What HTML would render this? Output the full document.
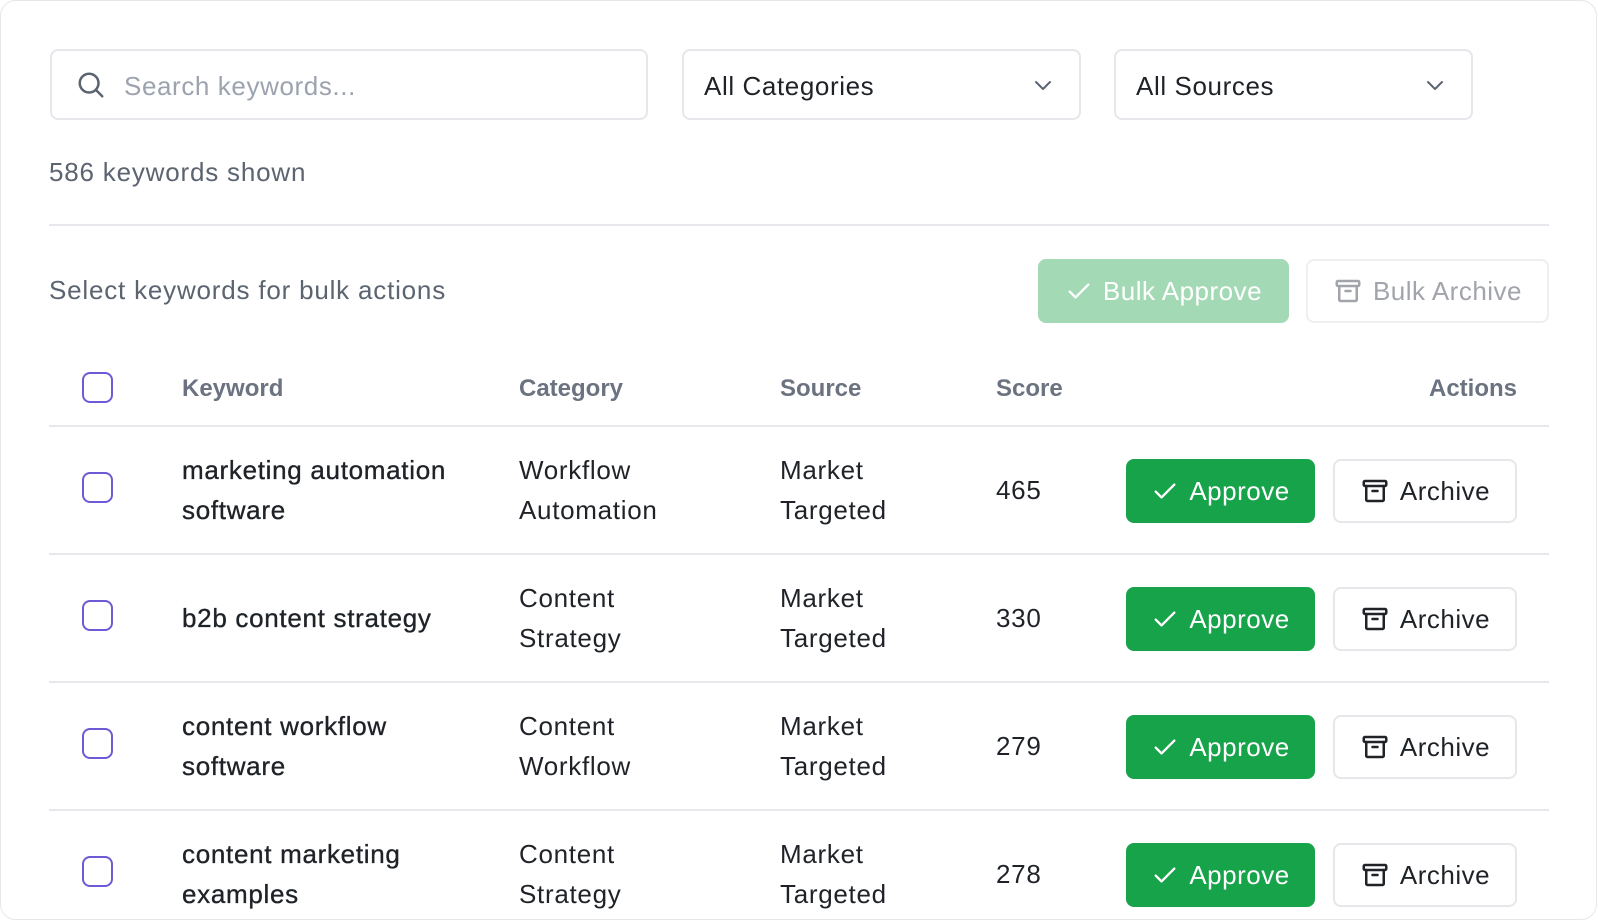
<!DOCTYPE html>
<html><head><meta charset="utf-8"><style>
*{box-sizing:border-box;margin:0;padding:0}
body{width:1598px;height:900px;background:#fff;font-family:"Liberation Sans",Arial,sans-serif;position:relative;overflow:hidden;color:#1f2328}
.card{position:absolute;left:0;top:0;width:1597px;height:920px;border:1px solid #e5e7eb;border-radius:16px}
.a{position:absolute}
.box{border:2px solid #e5e7eb;border-radius:8px;background:#fff}
.inp{font-size:26px;letter-spacing:0.6px;display:flex;align-items:center}
.cb{position:absolute;left:82px;width:31px;height:31px;border:2px solid #6d5ad6;border-radius:8px}
.hdr{position:absolute;top:375px;font-size:24px;font-weight:bold;color:#6b7280}
.line{position:absolute;left:49px;width:1500px;height:2px;background:#e8e8ec}
.cell{position:absolute;font-size:26px;letter-spacing:0.7px;line-height:40px;color:#1f2328}
.kw{-webkit-text-stroke:0.35px #1f2328}
.btn{position:absolute;height:64px;border-radius:8px;display:flex;align-items:center;justify-content:center;font-size:26px;letter-spacing:0.5px;gap:10px}
.ap{background:#17a34a;color:#fff;left:1126px;width:189px}
.ar{border:2px solid #e5e7eb;background:#fff;color:#1f2328;left:1333px;width:184px}
.t{font-size:26px;letter-spacing:0.8px;color:#5b6470}
</style></head><body>
<div class="card"></div>
<div class="a box inp" style="left:50px;top:49px;width:598px;height:71px;padding-left:24px;color:#9ca3af">
<svg width="30" height="30" viewBox="0 0 24 24" fill="none" stroke="#5b6470" stroke-width="2" stroke-linecap="round"><circle cx="10.5" cy="10.5" r="7.5"/><path d="M16 16l5 5"/></svg>
<span style="margin-left:18px;margin-top:3px">Search keywords...</span></div>
<div class="a box inp" style="left:682px;top:49px;width:399px;height:71px;padding-left:20px;color:#1f2328"><span style="margin-top:3px">All Categories</span>
<svg class="a" style="right:24px;top:22px" width="24" height="24" viewBox="0 0 24 24" fill="none" stroke="#5b6470" stroke-width="2" stroke-linecap="round" stroke-linejoin="round"><path d="M5 9l7 7 7-7"/></svg></div>
<div class="a box inp" style="left:1114px;top:49px;width:359px;height:71px;padding-left:20px;color:#1f2328"><span style="margin-top:3px">All Sources</span>
<svg class="a" style="right:24px;top:22px" width="24" height="24" viewBox="0 0 24 24" fill="none" stroke="#5b6470" stroke-width="2" stroke-linecap="round" stroke-linejoin="round"><path d="M5 9l7 7 7-7"/></svg></div>
<div class="a t" style="left:49px;top:157px">586 keywords shown</div>
<div class="line" style="top:224px"></div>
<div class="a t" style="left:49px;top:275px">Select keywords for bulk actions</div>
<div class="btn" style="left:1038px;top:259px;width:251px;background:#a3d9b5;color:#fff">
<svg width="28" height="28" viewBox="0 0 24 24" fill="none" stroke="#fff" stroke-width="2" stroke-linecap="round" stroke-linejoin="round"><path d="M4 12.5l5 5L20 6.5"/></svg>Bulk Approve</div>
<div class="btn" style="left:1306px;top:259px;width:243px;border:2px solid #eeeff1;color:#a1a4ab">
<svg width="30" height="30" viewBox="0 0 24 24" fill="none" stroke="#a1a4ab" stroke-width="2" stroke-linecap="round" stroke-linejoin="round"><rect x="3" y="4" width="18" height="4" rx="1"/><path d="M5 8v11a1 1 0 0 0 1 1h12a1 1 0 0 0 1-1V8M10 12h4"/></svg>Bulk Archive</div>

<div class="cb" style="top:372px"></div>
<div class="hdr" style="left:182px">Keyword</div>
<div class="hdr" style="left:519px">Category</div>
<div class="hdr" style="left:780px">Source</div>
<div class="hdr" style="left:996px">Score</div>
<div class="hdr" style="right:81px">Actions</div>
<div class="line" style="top:425px"></div>

<div class="cb" style="top:472px"></div>
<div class="cell kw" style="left:182px;top:450px">marketing automation<br>software</div>
<div class="cell" style="left:519px;top:450px">Workflow<br>Automation</div>
<div class="cell" style="left:780px;top:450px">Market<br>Targeted</div>
<div class="cell" style="left:996px;top:470px">465</div>
<div class="btn ap" style="top:459px"><svg width="28" height="28" viewBox="0 0 24 24" fill="none" stroke="#fff" stroke-width="2" stroke-linecap="round" stroke-linejoin="round"><path d="M4 12.5l5 5L20 6.5"/></svg>Approve</div>
<div class="btn ar" style="top:459px"><svg width="30" height="30" viewBox="0 0 24 24" fill="none" stroke="#1f2328" stroke-width="2" stroke-linecap="round" stroke-linejoin="round"><rect x="3" y="4" width="18" height="4" rx="1"/><path d="M5 8v11a1 1 0 0 0 1 1h12a1 1 0 0 0 1-1V8M10 12h4"/></svg>Archive</div>
<div class="line" style="top:553px"></div>

<div class="cb" style="top:600px"></div>
<div class="cell kw" style="left:182px;top:598px">b2b content strategy</div>
<div class="cell" style="left:519px;top:578px">Content<br>Strategy</div>
<div class="cell" style="left:780px;top:578px">Market<br>Targeted</div>
<div class="cell" style="left:996px;top:598px">330</div>
<div class="btn ap" style="top:587px"><svg width="28" height="28" viewBox="0 0 24 24" fill="none" stroke="#fff" stroke-width="2" stroke-linecap="round" stroke-linejoin="round"><path d="M4 12.5l5 5L20 6.5"/></svg>Approve</div>
<div class="btn ar" style="top:587px"><svg width="30" height="30" viewBox="0 0 24 24" fill="none" stroke="#1f2328" stroke-width="2" stroke-linecap="round" stroke-linejoin="round"><rect x="3" y="4" width="18" height="4" rx="1"/><path d="M5 8v11a1 1 0 0 0 1 1h12a1 1 0 0 0 1-1V8M10 12h4"/></svg>Archive</div>
<div class="line" style="top:681px"></div>

<div class="cb" style="top:728px"></div>
<div class="cell kw" style="left:182px;top:706px">content workflow<br>software</div>
<div class="cell" style="left:519px;top:706px">Content<br>Workflow</div>
<div class="cell" style="left:780px;top:706px">Market<br>Targeted</div>
<div class="cell" style="left:996px;top:726px">279</div>
<div class="btn ap" style="top:715px"><svg width="28" height="28" viewBox="0 0 24 24" fill="none" stroke="#fff" stroke-width="2" stroke-linecap="round" stroke-linejoin="round"><path d="M4 12.5l5 5L20 6.5"/></svg>Approve</div>
<div class="btn ar" style="top:715px"><svg width="30" height="30" viewBox="0 0 24 24" fill="none" stroke="#1f2328" stroke-width="2" stroke-linecap="round" stroke-linejoin="round"><rect x="3" y="4" width="18" height="4" rx="1"/><path d="M5 8v11a1 1 0 0 0 1 1h12a1 1 0 0 0 1-1V8M10 12h4"/></svg>Archive</div>
<div class="line" style="top:809px"></div>

<div class="cb" style="top:856px"></div>
<div class="cell kw" style="left:182px;top:834px">content marketing<br>examples</div>
<div class="cell" style="left:519px;top:834px">Content<br>Strategy</div>
<div class="cell" style="left:780px;top:834px">Market<br>Targeted</div>
<div class="cell" style="left:996px;top:854px">278</div>
<div class="btn ap" style="top:843px"><svg width="28" height="28" viewBox="0 0 24 24" fill="none" stroke="#fff" stroke-width="2" stroke-linecap="round" stroke-linejoin="round"><path d="M4 12.5l5 5L20 6.5"/></svg>Approve</div>
<div class="btn ar" style="top:843px"><svg width="30" height="30" viewBox="0 0 24 24" fill="none" stroke="#1f2328" stroke-width="2" stroke-linecap="round" stroke-linejoin="round"><rect x="3" y="4" width="18" height="4" rx="1"/><path d="M5 8v11a1 1 0 0 0 1 1h12a1 1 0 0 0 1-1V8M10 12h4"/></svg>Archive</div>
</body></html>
